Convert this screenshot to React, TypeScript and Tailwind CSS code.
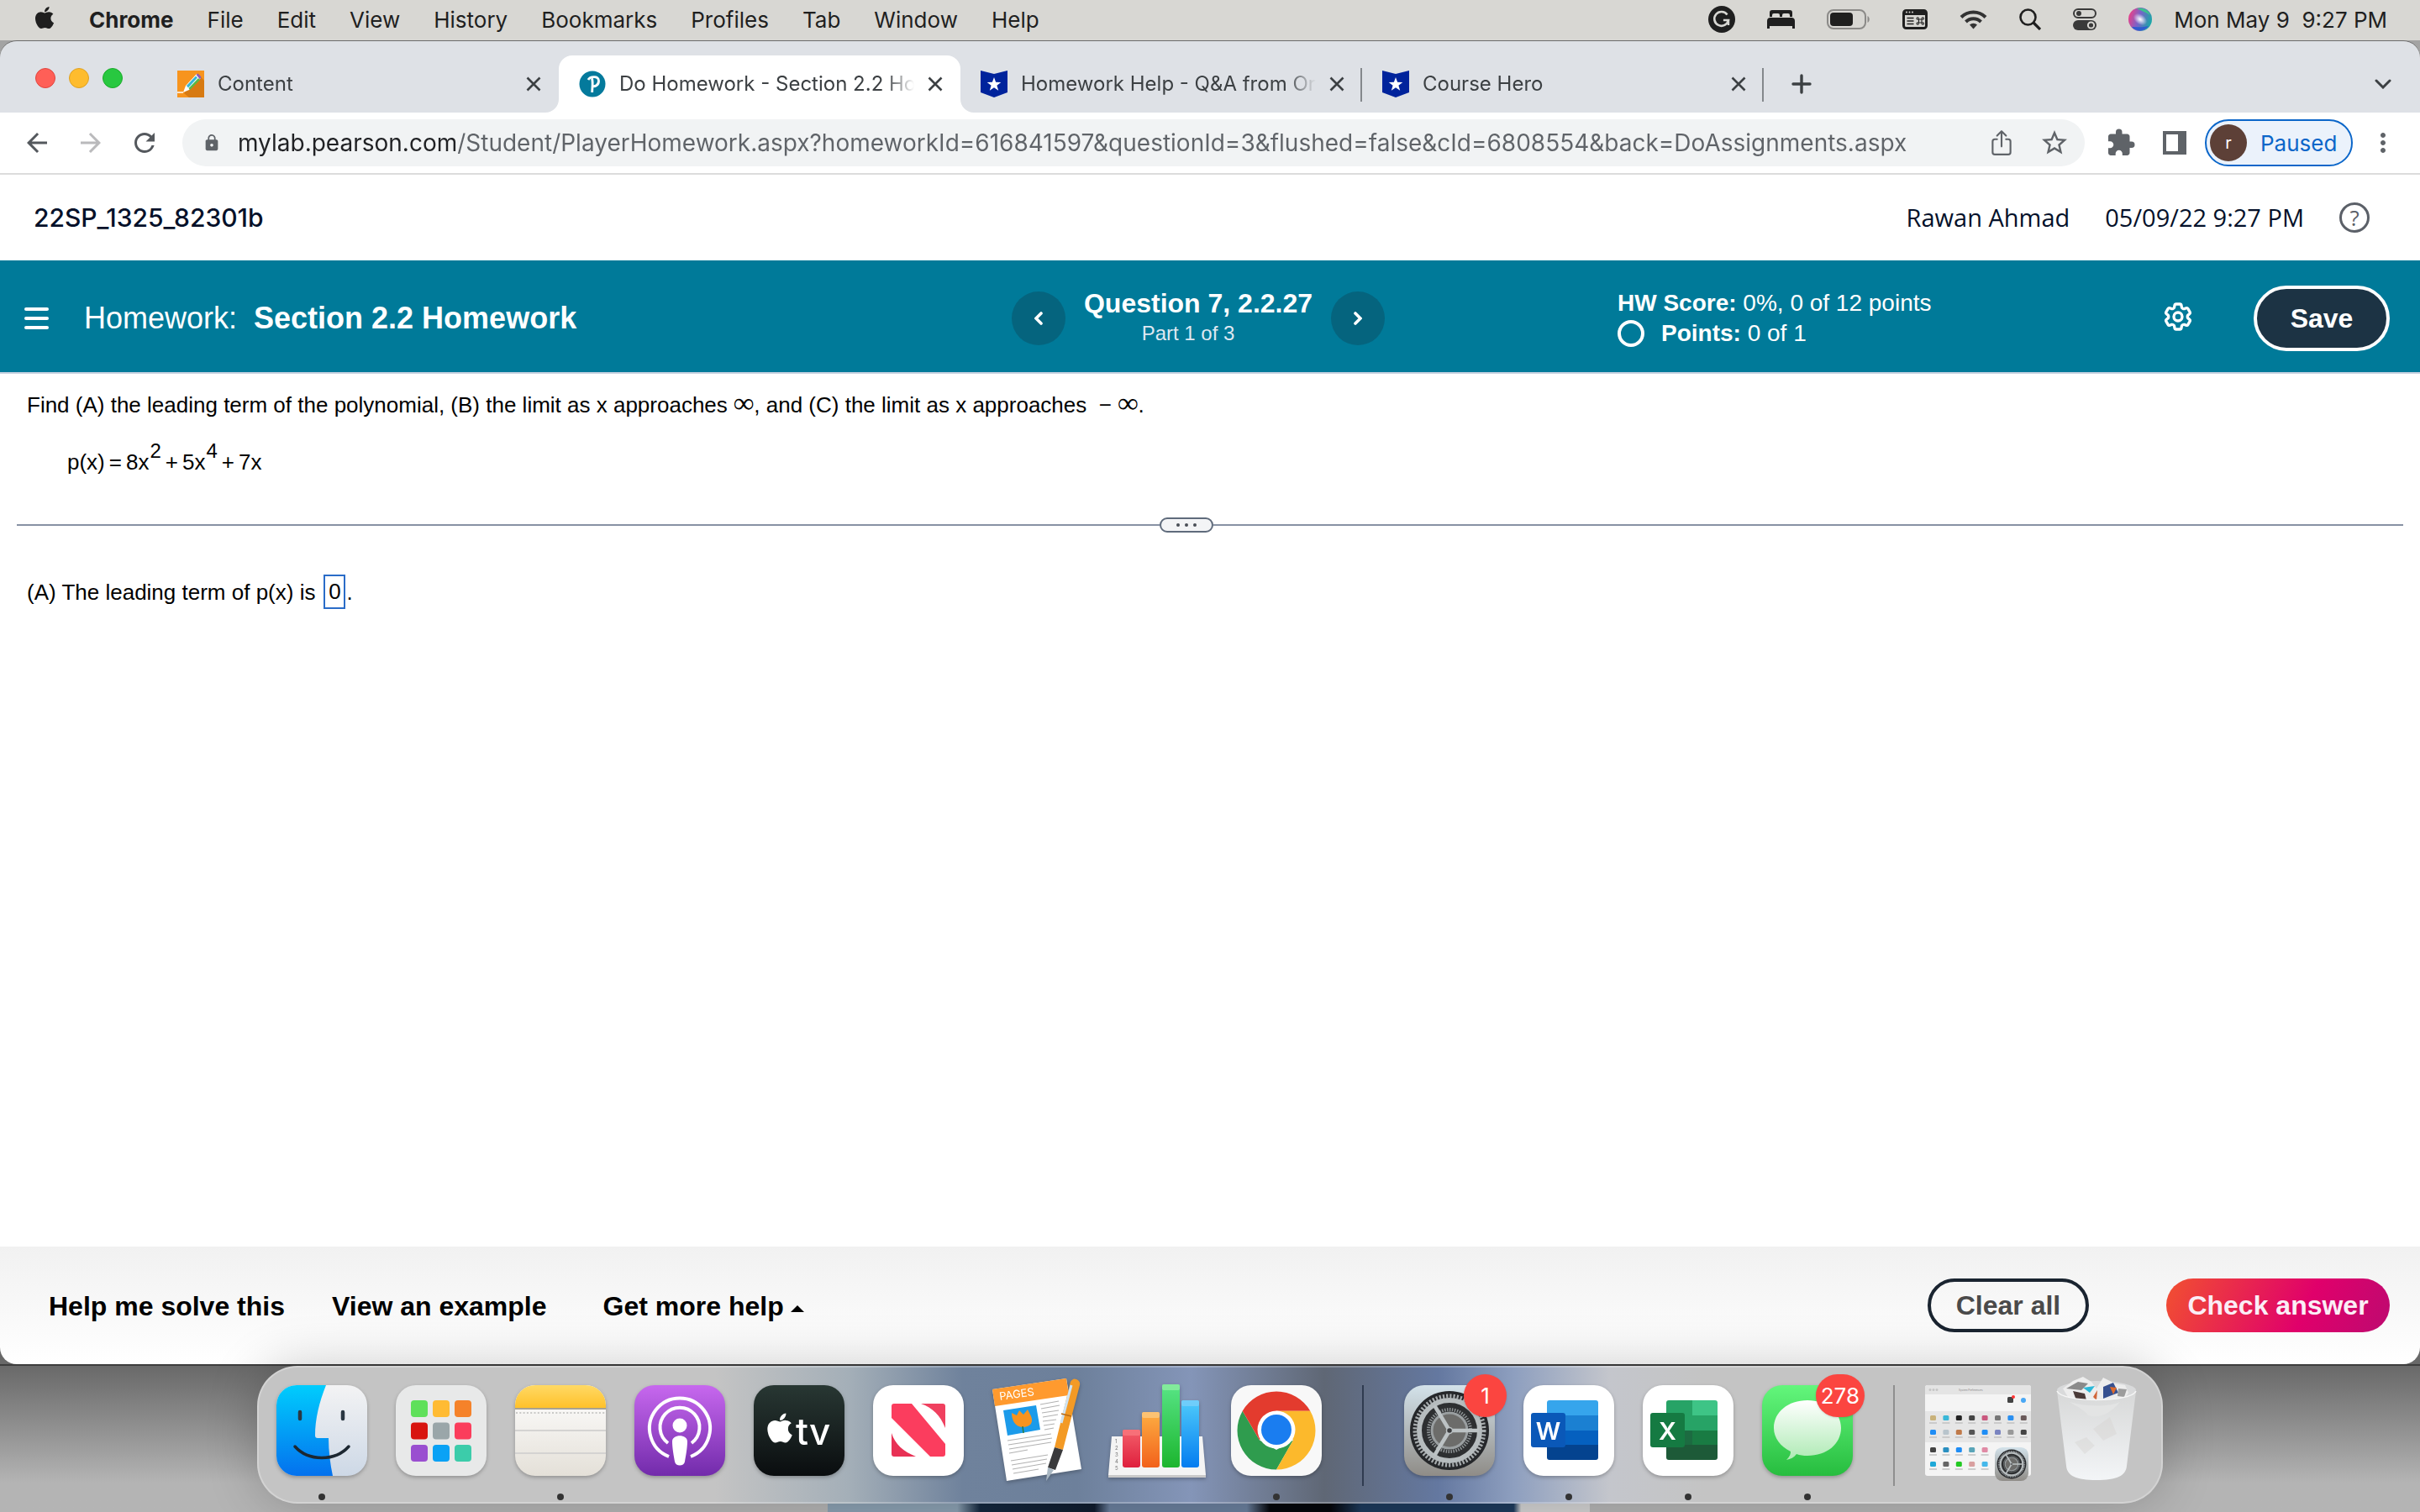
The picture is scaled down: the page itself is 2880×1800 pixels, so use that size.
import type { ReactNode } from "react";
import { FaApple } from "react-icons/fa";
import { HiOutlineCog6Tooth } from "react-icons/hi2";
import { IoShareOutline } from "react-icons/io5";
import {
  MdArrowBack,
  MdArrowForward,
  MdExtension,
  MdLock,
  MdMoreVert,
  MdRefresh,
  MdStarBorder,
} from "react-icons/md";

const MENUS = ["File", "Edit", "View", "History", "Bookmarks", "Profiles", "Tab", "Window", "Help"];

const URL_TEXT =
  "mylab.pearson.com/Student/PlayerHomework.aspx?homeworkId=616841597&questionId=3&flushed=false&cId=6808554&back=DoAssignments.aspx";

/* ---------- menu bar ---------- */

function StatusIcons() {
  return (
    <div className="flex items-center gap-[38px] text-[#1f1f1f]">
      <svg className="size-8" viewBox="0 0 32 32">
        <circle cx="16" cy="16" r="16" fill="currentColor" />
        <path d="M22.5 10.5a8.4 8.4 0 1 0 1.4 6.5h-6" fill="none" stroke="#d8d7d3" strokeWidth="2.6" />
        <path d="M24 16v7" stroke="#d8d7d3" strokeWidth="2.4" />
      </svg>
      <svg className="h-6 w-[33px]" viewBox="0 0 33 24" fill="currentColor">
        <path d="M3 9V4a3 3 0 0 1 3-3h21a3 3 0 0 1 3 3v5h-3V7a2 2 0 0 0-2-2h-5a2 2 0 0 0-2 2v2h-3V7a2 2 0 0 0-2-2H8a2 2 0 0 0-2 2v2z" />
        <path d="M0 14a4 4 0 0 1 4-4h25a4 4 0 0 1 4 4v9h-3v-3H3v3H0z" />
      </svg>
      <svg className="h-6 w-[52px]" viewBox="0 0 52 24">
        <rect x="1" y="1" width="45" height="22" rx="7" fill="none" stroke="#8b8a88" strokeWidth="2" />
        <rect x="4" y="4" width="27" height="16" rx="4" fill="currentColor" />
        <path d="M48.500 8c3 1.500 3 6.500 0 8z" fill="#8b8a88" />
      </svg>
      <svg className="h-6 w-[30px]" viewBox="0 0 30 24">
        <rect x="1.500" y="1.500" width="27" height="21" rx="3" fill="none" stroke="currentColor" strokeWidth="3" />
        <path d="M1 2h28v5H1z" fill="currentColor" />
        <circle cx="5" cy="3.500" r="1" fill="#d8d7d3" />
        <circle cx="8.500" cy="3.500" r="1" fill="#d8d7d3" />
        <circle cx="12" cy="3.500" r="1" fill="#d8d7d3" />
        <path d="M5.500 10.500h8M5.500 14h8M5.500 17.500h8" stroke="currentColor" strokeWidth="1.600" />
        <g fill="none" stroke="currentColor" strokeWidth="1.100">
          <path d="M19.500 12v4M23 12v4M19.500 12h3.500M19.500 16h3.500" />
          <circle cx="18.200" cy="11" r="1.200" />
          <circle cx="24.300" cy="11" r="1.200" />
          <circle cx="18.200" cy="17" r="1.200" />
          <circle cx="24.300" cy="17" r="1.200" />
        </g>
      </svg>
      <svg className="h-6 w-[33px]" viewBox="0 0 33 24" fill="none" stroke="#333" strokeWidth="4">
        <path d="M2 9.500a20.500 20.500 0 0 1 29 0" />
        <path d="M7.500 15a12.700 12.700 0 0 1 18 0" />
        <path d="M16.500 23.500l-4.500-5a6.500 6.500 0 0 1 9 0z" fill="#333" stroke="none" />
      </svg>
      <svg className="size-[26px]" viewBox="0 0 26 26" fill="none" stroke="currentColor" strokeWidth="2.600">
        <circle cx="10.500" cy="10.500" r="9" />
        <path d="M17 17l8 8" strokeWidth="3.200" />
      </svg>
      <svg className="h-[26px] w-7" viewBox="0 0 28 26">
        <rect x="1" y="1" width="26" height="10" rx="5" fill="none" stroke="#3a3a3a" strokeWidth="2" />
        <circle cx="7" cy="6" r="3" fill="#3a3a3a" />
        <rect y="14" width="28" height="12" rx="6" fill="#3a3a3a" />
        <circle cx="21.500" cy="20" r="3.600" fill="#3a3a3a" stroke="#d8d7d3" strokeWidth="2" />
      </svg>
      <svg className="size-7" viewBox="0 0 28 28">
        <defs>
          <linearGradient id="siri" x1="0" y1="0.300" x2="1" y2="0.600">
            <stop offset="0" stopColor="#ee3f86" />
            <stop offset="0.450" stopColor="#7a62c8" />
            <stop offset="1" stopColor="#16aaa6" />
          </linearGradient>
          <radialGradient id="siriGlow">
            <stop offset="0" stopColor="#fff" />
            <stop offset="0.300" stopColor="#fff" stopOpacity="0.700" />
            <stop offset="1" stopColor="#fff" stopOpacity="0" />
          </radialGradient>
        </defs>
        <circle cx="14" cy="14" r="14" fill="url(#siri)" />
        <path d="M4 23c5 6 15 6 20-1-8 2-13 1-20 1z" fill="#2f5bd0" />
        <path d="M10 1c7-2 14 2 16 8-6-4-11-5-16-8z" fill="#3cc08e" />
        <ellipse cx="14" cy="14" rx="9" ry="6" fill="url(#siriGlow)" transform="rotate(35 14 14)" />
      </svg>
    </div>
  );
}

function MenuBar() {
  return (
    <header className="flex h-12 items-center justify-between bg-[#d8d7d3] pr-[39px] pb-0.5 pl-[38px] text-[26px] text-[#1f1f1f]">
      <nav className="flex items-center gap-10" aria-label="Menu bar">
        <button type="button" aria-label="Apple">
          <FaApple className="mb-1 size-[30px]" />
        </button>
        <button type="button" className="-ml-0.5 font-bold">Chrome</button>
        {MENUS.map((m) => (
          <button type="button" key={m}>{m}</button>
        ))}
      </nav>
      <div className="flex items-center gap-[26px]">
        <StatusIcons />
        <span className="whitespace-pre">Mon May 9  9:27 PM</span>
      </div>
    </header>
  );
}

/* ---------- browser chrome ---------- */

function CloseIcon() {
  return (
    <svg className="size-[18px]" viewBox="0 0 18 18" stroke="#3c4043" strokeWidth="2.600">
      <path d="M1.500 1.500l15 15M16.500 1.500l-15 15" />
    </svg>
  );
}

function ContentFavicon() {
  return (
    <svg className="size-8 shrink-0" viewBox="0 0 32 32">
      <path d="M0 0h32v32H0z" fill="#f7941e" />
      <path d="M32 12v20H14l-6-5L25 4z" fill="#d77a12" />
      <path d="M7 26l3-8L23 4l5 5-14 14z" fill="#fff" />
      <path d="M11 18L22 6.500l2 2L13 20.500z" fill="#35b6d6" />
      <path d="M13.500 21L25 9l2 2-12 12z" fill="#59b947" />
      <path d="M22.500 5l2-1.500 4 4-1.500 3z" fill="#8e5bb5" />
      <path d="M0 26h7" stroke="#fff" strokeWidth="1.500" />
    </svg>
  );
}

function PearsonFavicon() {
  return (
    <svg className="size-8 shrink-0" viewBox="0 0 32 32">
      <circle cx="16" cy="16" r="15.500" fill="#047a9c" />
      <path
        d="M11 11c2-4 12-5.500 12.500 1 .3 5-4 7.500-8 6.500M15.500 9.500c1.500 5 .2 10 .2 16.500"
        fill="none"
        stroke="#fff"
        strokeWidth="2.800"
      />
    </svg>
  );
}

function HeroFavicon() {
  return (
    <svg className="size-8 shrink-0" viewBox="0 0 32 32">
      <path d="M0 0l16 4 16-4v26l-16 6-16-6z" fill="#00239c" />
      <path d="M16 8l2.100 5.800 6.200.2-4.900 3.800 1.800 6-5.200-3.500-5.200 3.500 1.800-6L7.700 14l6.200-.2z" fill="#fff" />
    </svg>
  );
}

type TabProps = { icon: ReactNode; title: string; active?: boolean; divider?: boolean };

function BrowserTab({ icon, title, active, divider }: TabProps) {
  return (
    <div
      className={`relative flex h-[68px] w-[478px] items-center gap-4 rounded-t-2xl pr-[21px] pl-6 ${
        active ? "bg-white" : ""
      }`}
    >
      {icon}
      <a
        href="#tab"
        className="min-w-0 flex-1 overflow-hidden mask-r-from-90% text-[24px] whitespace-nowrap text-[#3c4043]"
      >
        {title}
      </a>
      <button type="button" aria-label={`Close ${title}`}>
        <CloseIcon />
      </button>
      {divider && <span className="absolute top-[15px] right-0 h-10 w-0.5 bg-[#84888c]" />}
      {active && (
        <>
          <svg className="absolute bottom-0 -left-4 size-4" viewBox="0 0 16 16">
            <path d="M16 0v16H0A16 16 0 0 0 16 0z" fill="#fff" />
          </svg>
          <svg className="absolute -right-4 bottom-0 size-4" viewBox="0 0 16 16">
            <path d="M0 0v16h16A16 16 0 0 1 0 0z" fill="#fff" />
          </svg>
        </>
      )}
    </div>
  );
}

function TabStrip() {
  return (
    <div className="flex h-[85px] items-end rounded-t-[20px] bg-[#dee1e6]">
      <div className="flex h-full w-[187px] items-start gap-4 pt-8 pl-[42px]">
        <button type="button" aria-label="Close window" className="size-6 rounded-full border border-[#e0443e] bg-[#ff5f57]" />
        <button type="button" aria-label="Minimize window" className="size-6 rounded-full border border-[#dea123] bg-[#febc2e]" />
        <button type="button" aria-label="Zoom window" className="size-6 rounded-full border border-[#1aab29] bg-[#28c840]" />
      </div>
      <BrowserTab icon={<ContentFavicon />} title="Content" />
      <BrowserTab icon={<PearsonFavicon />} title="Do Homework - Section 2.2 Ho" active />
      <BrowserTab icon={<HeroFavicon />} title="Homework Help - Q&A from Or" divider />
      <BrowserTab icon={<HeroFavicon />} title="Course Hero" divider />
      <button type="button" aria-label="New tab" className="flex h-[68px] w-[90px] items-center justify-center">
        <svg className="size-6" viewBox="0 0 24 24" stroke="#3c4043" strokeWidth="3.400" strokeLinecap="round">
          <path d="M12 2v20M2 12h20" />
        </svg>
      </button>
      <button type="button" aria-label="Search tabs" className="mr-[34px] ml-auto flex h-[68px] items-center">
        <svg className="h-3 w-5" viewBox="0 0 20 12" fill="none" stroke="#3c4043" strokeWidth="3" strokeLinecap="round">
          <path d="M2 2l8 8 8-8" />
        </svg>
      </button>
    </div>
  );
}

function Toolbar() {
  return (
    <div className="flex h-[74px] items-center border-b-2 border-[#dcdcdc] bg-white px-[26px] text-[#5f6368]">
      <div className="flex gap-7">
        <button type="button" aria-label="Back"><MdArrowBack className="size-9 text-[#54585d]" /></button>
        <button type="button" aria-label="Forward"><MdArrowForward className="size-9 text-[#bababc]" /></button>
        <button type="button" aria-label="Reload"><MdRefresh className="size-9 text-[#54585d]" /></button>
      </div>
      <div className="ml-[27px] flex h-14 flex-1 items-center rounded-full bg-[#f1f3f4] pr-[18px] pl-6">
        <MdLock className="size-[22px]" />
        <input
          aria-label="Address and search bar"
          defaultValue={URL_TEXT}
          className="ml-5 h-14 flex-1 bg-[linear-gradient(90deg,#202124_259px,#5f6368_259px)] bg-clip-text text-[28px] text-transparent outline-none"
        />
        <div className="flex gap-7">
          <button type="button" aria-label="Share"><IoShareOutline className="size-[34px]" /></button>
          <button type="button" aria-label="Bookmark"><MdStarBorder className="size-9" /></button>
        </div>
      </div>
      <button type="button" aria-label="Extensions" className="ml-[25px]"><MdExtension className="size-9" /></button>
      <button type="button" aria-label="Side panel" className="ml-7 flex size-9 items-center justify-center">
        <span className="h-7 w-7 border-4 border-r-[10px] border-[#5f6368]" />
      </button>
      <button
        type="button"
        className="ml-[18px] flex h-14 w-44 items-center gap-4 rounded-full border-2 border-[#0b66c9] bg-[#ebf2fb] pl-1 text-[26px] text-[#0b66c9]"
      >
        <span className="flex size-11 items-center justify-center rounded-full bg-[#5d4037] text-[20px] text-white">r</span>
        Paused
      </button>
      <button type="button" aria-label="More" className="ml-[18px]"><MdMoreVert className="size-9" /></button>
    </div>
  );
}

/* ---------- homework page ---------- */

function CourseHeader() {
  return (
    <div className="flex h-[102px] items-center justify-between bg-white pr-[60px] pl-10 text-[#05112a]">
      <h1 className="text-[30px] font-medium">22SP_1325_82301b</h1>
      <div className="flex items-center gap-[42px] font-['Open_Sans',sans-serif] text-[29px]">
        <span>Rawan Ahmad</span>
        <span>05/09/22 9:27 PM</span>
        <button
          type="button"
          aria-label="Help"
          className="flex size-9 items-center justify-center rounded-full border-[3px] border-[#5b6068] text-[26px] text-[#5b6068]"
        >
          ?
        </button>
      </div>
    </div>
  );
}

function NavCircle({ label, d }: { label: string; d: string }) {
  return (
    <button type="button" aria-label={label} className="flex size-16 items-center justify-center rounded-full bg-[#05647e]">
      <svg className="h-4 w-2.5" viewBox="0 0 10 16" fill="none" stroke="#fff" strokeWidth="3.600" strokeLinecap="round">
        <path d={d} />
      </svg>
    </button>
  );
}

function QuestionBar() {
  return (
    <div className="grid h-[135px] grid-cols-[1204px_721px_1fr] items-center border-b-2 border-[#c7d2e0] bg-[#007a99] pt-1 text-white">
      <div className="flex items-center pl-[29px]">
        <button type="button" aria-label="Open menu" className="flex flex-col gap-[7px]">
          <span className="h-1 w-[29px] rounded-full bg-white" />
          <span className="h-1 w-[29px] rounded-full bg-white" />
          <span className="h-1 w-[29px] rounded-full bg-white" />
        </button>
        <h2 className="ml-[42px] flex gap-5 text-[36px]">
          <span>Homework:</span>
          <strong>Section 2.2 Homework</strong>
        </h2>
      </div>
      <div className="flex items-center">
        <NavCircle label="Previous question" d="M8 2L2 8l6 6" />
        <div className="w-[316px] text-center">
          <p className="text-[32px] leading-9 font-bold">Question 7, 2.2.27</p>
          <p className="pr-6 text-[24px] leading-9 text-[#dfe8f2]">Part 1 of 3</p>
        </div>
        <NavCircle label="Next question" d="M2 2l6 6-6 6" />
      </div>
      <div className="flex items-center justify-between pr-9">
        <div className="text-[28px] leading-9">
          <p><b>HW Score:</b> 0%, 0 of 12 points</p>
          <p className="flex items-center gap-5">
            <span className="size-8 rounded-full border-4 border-white" />
            <span><b>Points:</b> 0 of 1</span>
          </p>
        </div>
        <div className="flex items-center gap-[70px]">
          <button type="button" aria-label="Settings"><HiOutlineCog6Tooth className="mb-1 size-10 stroke-2" /></button>
          <button type="button" className="h-[78px] w-[162px] rounded-full border-4 border-white bg-[#1c3344] text-[32px] font-bold">
            Save
          </button>
        </div>
      </div>
    </div>
  );
}

function Infinity() {
  return <span className="font-['Liberation_Serif',serif] text-[34px] leading-none font-bold">∞</span>;
}

function Power({ children }: { children: string }) {
  return <sup className="-top-[0.6em] ml-px text-[24px] leading-none">{children}</sup>;
}

function Exercise() {
  return (
    <main className="flex-1 bg-white text-[26px] leading-10 text-black">
      <div className="px-8 pt-[17px]">
        <p>
          Find (A) the leading term of the polynomial, (B) the limit as x approaches <Infinity />, and (C) the limit as x
          approaches&nbsp; − <Infinity />.
        </p>
        <p className="mt-7 ml-12 flex gap-[5px]">
          <span>p(x)</span>
          <span>=</span>
          <span>8x<Power>2</Power></span>
          <span>+</span>
          <span>5x<Power>4</Power></span>
          <span>+</span>
          <span>7x</span>
        </p>
      </div>
      <div className="mx-5 mt-[46px] flex items-center">
        <span className="h-0.5 grow basis-0 bg-[#8792a4]" />
        <button
          type="button"
          aria-label="Resize panes"
          className="flex h-[18px] w-16 items-center justify-center gap-1.5 rounded-full border-2 border-[#5f6b7c] bg-[#f3f4f6]"
        >
          <span className="size-1 rounded-full bg-[#4a4f57]" />
          <span className="size-1 rounded-full bg-[#4a4f57]" />
          <span className="size-1 rounded-full bg-[#4a4f57]" />
        </button>
        <span className="h-0.5 grow basis-14 bg-[#8792a4]" />
      </div>
      <p className="mt-[50px] flex items-center px-8">
        <label htmlFor="term">(A) The leading term of p(x) is</label>
        <input
          id="term"
          defaultValue="0"
          className="mr-px ml-2.5 h-[41px] w-[26px] border-2 border-[#2a6cc8] text-center outline-none"
        />
        .
      </p>
    </main>
  );
}

function ActionBar() {
  return (
    <footer className="flex h-[140px] items-center justify-between rounded-b-[20px] bg-linear-to-b from-[#f1f1f1] to-white pr-9 pl-[58px] text-[32px] font-bold text-black">
      <div className="flex pt-0.5">
        <button type="button">Help me solve this</button>
        <button type="button" className="ml-14">View an example</button>
        <button type="button" className="ml-[67px] flex items-center gap-2">
          Get more help
          <svg className="mt-1.5 h-2 w-4" viewBox="0 0 16 8"><path d="M8 0l8 8H0z" /></svg>
        </button>
      </div>
      <div className="flex gap-[92px]">
        <button type="button" className="h-16 w-48 rounded-full border-4 border-[#1a2430] text-[#4a4a4a]">Clear all</button>
        <button
          type="button"
          className="h-16 w-[266px] rounded-full bg-[linear-gradient(115deg,#f04a35_5%,#e0006b_62%,#bd0a70)] text-[#fbeef6]"
        >
          Check answer
        </button>
      </div>
    </footer>
  );
}

/* ---------- dock ---------- */

function Finder() {
  return (
    <>
      <path d="M24 0h60a24 24 0 0 1 24 24v60a24 24 0 0 1-24 24H24A24 24 0 0 1 0 84V24A24 24 0 0 1 24 0z" fill="url(#finderR)" />
      <path d="M24 0h35C51 20 46 40 46 60q0 3 3 3h13c0 15 2 31 5 45H24A24 24 0 0 1 0 84V24A24 24 0 0 1 24 0z" fill="url(#finderL)" />
      <path d="M28 32v8M79 32v8" stroke="#2a3742" strokeWidth="4.500" strokeLinecap="round" />
      <path d="M22 73c16 18 48 18 64 0" fill="none" stroke="#1c2731" strokeWidth="3.500" strokeLinecap="round" />
    </>
  );
}

const PAD = [
  ["#5fe05a", "#ffbb33", "#f5822a"],
  ["#d8140f", "#9aa6a9", "#fb3d5c"],
  ["#9a4fd0", "#0aa2f5", "#3cccaa"],
];

function Launchpad() {
  return (
    <>
      <rect width="108" height="108" rx="24" fill="#e8e9e9" />
      {PAD.map((row, r) =>
        row.map((c, i) => <rect key={c} x={18 + i * 26} y={18 + r * 26.500} width="20" height="20" rx="4" fill={c} />)
      )}
    </>
  );
}

function Notes() {
  return (
    <>
      <rect width="108" height="108" rx="24" fill="url(#notesP)" />
      <path d="M0 27v-3A24 24 0 0 1 24 0h60a24 24 0 0 1 24 24v3z" fill="url(#notesY)" />
      <path d="M0 28h108" stroke="#a9a28f" strokeWidth="2" />
      <path d="M1 33h107" stroke="#c9c9c7" strokeWidth="2" strokeDasharray="2 2.300" />
      <path d="M0 54h108M0 81h108" stroke="#d4d3d2" strokeWidth="2" />
    </>
  );
}

function Podcasts() {
  return (
    <>
      <rect width="108" height="108" rx="24" fill="url(#pod)" />
      <g fill="none" stroke="#fff" strokeWidth="4">
        <path d="M41 85a36 36 0 1 1 26 0" />
        <path d="M40 69a23.500 23.500 0 1 1 28 0" />
      </g>
      <circle cx="54" cy="48" r="8.500" fill="#fff" />
      <path d="M45 67c0-9 18-9 18 0 0 8-2 18-3 24-1 6-11 6-12 0-1-6-3-16-3-24z" fill="#fff" />
    </>
  );
}

function AppleTv() {
  return (
    <>
      <rect width="108" height="108" rx="24" fill="url(#tv)" />
      <FaApple x="11" y="31" size={40} color="#fff" />
      <text x="50" y="71" fontSize="44" fontWeight="500" fill="#fff">tv</text>
    </>
  );
}

function News() {
  return (
    <>
      <rect width="108" height="108" rx="24" fill="#fff" />
      <path d="M25 22h21l40 48v12q0 3-3 3H68L22 39V25q0-3 3-3z" fill="#fb3d5e" />
      <path d="M57 22h26q3 0 3 3v26C80 36 71 27 57 22z" fill="#f0405f" />
      <path d="M22 57c4 13 14 22 29 28H25q-3 0-3-3z" fill="#e83155" />
    </>
  );
}

function Pages() {
  return (
    <>
      <path d="M0 5L88-8l18 108-89 14z" fill="#fff" />
      <path d="M0 5L88-8l3 20L3 25z" fill="#ff9a2e" />
      <text x="9" y="18" fontSize="13" fill="#fff" transform="rotate(-8 9 18)">PAGES</text>
      <path d="M13 30l39-6 5 29-39 7z" fill="#1c9bea" />
      <path d="M35 50c-8-1-12-8-12-17l6 3 3-6 5 5 5-6 4 8c3 7 0 13-11 13z" fill="#f7931e" />
      <path d="M36 49l1 8" stroke="#2f7a38" strokeWidth="1.500" />
      <g stroke="#b2b2b2" strokeWidth="1.200">
        <path d="M57 23l22-4M58 28l22-4M59 33l20-3M60 38l18-3M60 43l16-2M61 48l13-2M62 53l11-2" />
        <path d="M18 66l52-8M19 71l52-8M20 76l50-8M20 81l22-4M22 90l44-7M23 95l42-7M24 100l40-7M25 105l30-5" />
      </g>
      <path d="M93-4q3-5 7-3 5 2 4 7L84 77l-10-3z" fill="#f39a25" />
      <path d="M94 0l-12 45" stroke="#cfe3f2" strokeWidth="3" />
      <path d="M82 34l12 3" stroke="#b96a12" strokeWidth="1.500" />
      <path d="M74 74l10 3-9 24-9-3z" fill="#3a3a3c" />
      <path d="M66 98l7 3-9 13z" fill="#a9b7c2" />
    </>
  );
}

const BARS = [
  { x: 13, y: 53, fill: "url(#barR)", cap: "#f77078" },
  { x: 36, y: 32, fill: "url(#barO)", cap: "#fcc272" },
  { x: 60, y: -1, fill: "url(#barG)", cap: "#82eb9b" },
  { x: 83, y: 18, fill: "url(#barB)", cap: "#6fcdfa" },
];

function Numbers() {
  return (
    <>
      <path d="M0 61h108l4 46H-4z" fill="#f4f4f4" />
      <path d="M-4 107h116v3H-4z" fill="#c9c9c9" />
      {["1", "2", "3", "4", "5"].map((n, i) => (
        <text key={n} x="4" y={69 + i * 8} fontSize="6" fill="#777">{n}</text>
      ))}
      {BARS.map((b) => (
        <g key={b.x}>
          <rect x={b.x} y={b.y} width="21" height={98 - b.y} rx="3" fill={b.fill} />
          <rect x={b.x} y={b.y} width="21" height="7" rx="2" fill={b.cap} />
        </g>
      ))}
    </>
  );
}

function Chrome() {
  return (
    <>
      <rect width="108" height="108" rx="24" fill="#f8f8f8" />
      <path d="M54 100.500A46.500 46.500 0 0 1 13.700 30.800L34 65.500 54 77l20-11.500z" fill="#2f9c4e" />
      <path d="M13.700 30.800A46.500 46.500 0 0 1 94.300 30.800H54L34 65.500z" fill="#e33b2e" />
      <path d="M54 30.800h40.300A46.500 46.500 0 0 1 54 100.500L74 65.500z" fill="#fcb92c" />
      <circle cx="54" cy="53" r="22.500" fill="#fff" />
      <circle cx="54" cy="53" r="18" fill="#1a7df0" />
    </>
  );
}

function Gear() {
  return (
    <>
      <rect width="108" height="108" rx="24" fill="url(#gearBg)" />
      <circle cx="54" cy="54" r="47" fill="#25272a" />
      <circle cx="54" cy="54" r="41" fill="none" stroke="#a6abad" strokeWidth="5" strokeDasharray="2.200 2" />
      <circle cx="54" cy="54" r="36" fill="#2d2f31" stroke="#b6bcbe" strokeWidth="6" />
      <circle cx="54" cy="54" r="25" fill="none" stroke="#8d9294" strokeWidth="4" strokeDasharray="1.500 1.500" />
      <circle cx="54" cy="54" r="21" fill="#6c6c6a" stroke="#9a9fa1" strokeWidth="3" />
      <path d="M54 54h35M54 54L36 24M54 54L36 84" stroke="#bcc2c4" strokeWidth="4.500" />
      <circle cx="54" cy="54" r="3.500" fill="#3a3c3e" stroke="#bcc2c4" strokeWidth="1.500" />
    </>
  );
}

function Word() {
  return (
    <>
      <rect width="108" height="108" rx="24" fill="#fff" />
      <path d="M28 36V21q0-3 3-3h55q3 0 3 3v15z" fill="#36a5ec" />
      <path d="M28 36h61v18H28z" fill="#1b80d2" />
      <path d="M28 54h61v18H28z" fill="#0560bf" />
      <path d="M28 71h61v15q0 3-3 3H31q-3 0-3-3z" fill="#04438f" />
      <rect x="9" y="33" width="41" height="41" rx="3" fill="#0a58b8" />
      <text x="29.500" y="65" fontSize="29" fontWeight="600" fill="#fff" textAnchor="middle">W</text>
    </>
  );
}

function Excel() {
  return (
    <>
      <rect width="108" height="108" rx="24" fill="#fff" />
      <path d="M28 71V21q0-3 3-3h28v53z" fill="#27a366" />
      <path d="M59 18h27q3 0 3 3v15H59z" fill="#3ec486" />
      <path d="M59 36h30v18H59z" fill="#27a366" />
      <path d="M28 54h31v18H28z" fill="#1c6b41" />
      <path d="M59 54h30v18H59z" fill="#197b43" />
      <path d="M28 71h61v15q0 3-3 3H31q-3 0-3-3z" fill="#1d5a38" />
      <rect x="9" y="33" width="41" height="41" rx="3" fill="#157a42" />
      <text x="29.500" y="65" fontSize="29" fontWeight="600" fill="#fff" textAnchor="middle">X</text>
    </>
  );
}

function Messages() {
  return (
    <>
      <rect width="108" height="108" rx="24" fill="url(#msg)" />
      <path d="M54 18c23 0 40 14 40 33S77 84 54 84c-5 0-9-.5-13-2-3 4-7 6-12 7 4-4 5-7 5-10C22 73 14 63 14 51c0-19 17-33 40-33z" fill="url(#bubble)" />
    </>
  );
}

const PREF_ROWS = [
  { y: 36, colors: ["#c9b27a", "#3ab8d8", "#222", "#444", "#c9587e", "#777", "#2a8ff0", "#6a5a5a"] },
  { y: 53, colors: ["#1f8df5", "#b8c4cc", "#c07a4a", "#555", "#1f8df5", "#7a84c0", "#999", "#444"] },
  { y: 74, colors: ["#444", "#2a8fc0", "#1f8df5", "#5aa5b8", "#e08aa5"] },
  { y: 91, colors: ["#1fa9d8", "#666", "#22c922", "#d9a0a0", "#46b8ea"] },
];

function PrefsWindow() {
  return (
    <svg className="h-[108px] w-[126px] overflow-visible" viewBox="0 0 126 108">
      <rect width="126" height="108" rx="3" fill="#f4f4f4" />
      <path d="M0 11h126V3q0-3-3-3H3Q0 0 0 3z" fill="#e4e4e4" />
      <path d="M0 31h126v37H0z" fill="#e6e6e6" />
      <circle cx="6" cy="5.500" r="1.500" fill="#c6c6c6" />
      <circle cx="10" cy="5.500" r="1.500" fill="#c6c6c6" />
      <circle cx="14" cy="5.500" r="1.500" fill="#c6c6c6" />
      <text x="40" y="7" fontSize="3" fill="#8a8a8a">System Preferences</text>
      <rect x="98" y="14" width="7" height="7" rx="1.500" fill="#444" />
      <circle cx="105" cy="14" r="2" fill="#f33" />
      <circle cx="117" cy="18" r="3" fill="#4aa8f5" />
      {PREF_ROWS.map((row) =>
        row.colors.map((c, i) => (
          <g key={`${row.y}-${i}`}>
            <rect x={6 + i * 15.400} y={row.y} width="7" height="6" rx="1.500" fill={c} />
            <path d={`M${5 + i * 15.400} ${row.y + 9}h9`} stroke="#c2c2c2" strokeWidth="1.500" />
          </g>
        ))
      )}
      <svg x="83" y="74" width="40" height="40" viewBox="0 0 108 108">
        <Gear />
      </svg>
    </svg>
  );
}

function Trash() {
  return (
    <svg className="h-[108px] w-[96px] overflow-visible" viewBox="0 0 96 108">
      <ellipse cx="48" cy="6" rx="47" ry="11" fill="#d9dadb" />
      <path d="M8 4l12-9 12-5 10 6 6 8 8-13 14 7 12 2 4 9-8 12H18z" fill="#ededed" />
      <path d="M12 4l14-8 12 2-8 8z" fill="#8a8a8a" />
      <path d="M20 7l14 3 2 8H24z" fill="#4a3a38" />
      <path d="M32 3l14-2-6 8z" fill="#2cb8d8" />
      <path d="M56 2l12-5 6 12-18 7z" fill="#36508f" />
      <path d="M64 2l8 1-4 8z" fill="#dd6a2c" />
      <path d="M44 14l5-8-1 12z" fill="#d0663a" />
      <path d="M74 4l10 1-3 9-8-1z" fill="#9c9c9c" />
      <path d="M1 7c6 14 88 14 94 0L84 96c-1 12-12 17-36 17S13 108 12 96z" fill="url(#trash)" />
      <path d="M16 20c10 6 18 10 22 16 14 4 26-2 38-16-12 6-40 6-60 0z" fill="#e3e4e4" />
      <path d="M22 68l14-6 10 10-12 10zM44 52l20-14 8 20-16 8z" fill="#d5d3d0" opacity="0.400" />
      <path d="M1 7c6 14 88 14 94 0" fill="none" stroke="#f6f6f6" strokeWidth="1.500" />
    </svg>
  );
}

function DockDefs() {
  const stops: [string, string, string][] = [
    ["finderL", "#00cdfd", "#0471ee"],
    ["finderR", "#f3f3f4", "#cdd8e6"],
    ["notesY", "#ffd965", "#ffc12a"],
    ["notesP", "#ffffff", "#e4e0d8"],
    ["pod", "#c768ee", "#722bab"],
    ["tv", "#283733", "#0a0d0f"],
    ["barR", "#f35f6a", "#df1f3d"],
    ["barO", "#fdae42", "#f2611b"],
    ["barG", "#58e586", "#1cb52e"],
    ["barB", "#4fcbfb", "#047cf0"],
    ["gearBg", "#d3e2ea", "#8f8c87"],
    ["msg", "#63f67c", "#27bd3f"],
    ["bubble", "#ffffff", "#aeeab4"],
    ["trash", "#d7d8d8", "#f3f5f7"],
  ];
  return (
    <svg className="absolute size-0" aria-hidden="true">
      <defs>
        {stops.map(([id, a, b]) => (
          <linearGradient key={id} id={id} x1="0" y1="0" x2="0" y2="1">
            <stop offset="0" stopColor={a} />
            <stop offset="1" stopColor={b} />
          </linearGradient>
        ))}
      </defs>
    </svg>
  );
}

type DockItemProps = { label: string; running?: boolean; badge?: string; children: ReactNode };

function DockItem({ label, running, badge, children }: DockItemProps) {
  return (
    <button type="button" aria-label={label} className="relative size-[108px]">
      <svg className="size-[108px] overflow-visible drop-shadow-[0_2px_2px_rgba(0,0,0,0.25)]" viewBox="0 0 108 108">
        {children}
      </svg>
      {badge && (
        <span className="absolute -top-[13px] -right-3.5 flex h-[51px] min-w-[51px] items-center justify-center rounded-full bg-[#fb4540] px-1.5 text-[26px] text-white shadow">
          {badge}
        </span>
      )}
      {running && <span className="absolute top-[129px] left-[50px] size-2 rounded-full bg-[#333]" />}
    </button>
  );
}

function Dock() {
  return (
    <div className="relative flex h-44 justify-center bg-linear-to-b from-[#686868] to-[#b4b4b4] to-80%">
      <DockDefs />
      {/* slice of wallpaper that shows above and below the dock */}
      <div className="absolute inset-y-0 left-[34.2%] w-[31.5%] bg-[linear-gradient(90deg,#8ba0b2_0%,#8ba0b2_17%,#14283f_20%,#101c2e_35%,#6a7f9d_37%,#6a7f9d_55%,#05070c_58%,#05070c_66%,#1d3a5c_70%,#1d3a5c_90%,#d2d2d2_91%)]" />
      <div className="absolute inset-x-0 top-0 h-0.5 bg-[#3d3d3d]" />
      <div className="relative mt-0.5 flex h-[164px] rounded-[48px] border-2 border-white/25 bg-[linear-gradient(90deg,#c4c4c4_0%,#c4c4c4_24%,#a4afb8_31%,#6f829c_37%,#6d809b_43%,#8495b8_49%,#5f6775_56%,#6478a0_62%,#8e9fbf_66%,#c4c6cc_71%,#c4c4c4_76%)] px-[21px] pt-[21px] shadow-[0_0_60px_rgba(0,0,0,0.22)]">
        <div className="flex gap-[34px]">
          <DockItem label="Finder" running><Finder /></DockItem>
          <DockItem label="Launchpad"><Launchpad /></DockItem>
          <DockItem label="Notes" running><Notes /></DockItem>
          <DockItem label="Podcasts"><Podcasts /></DockItem>
          <DockItem label="TV"><AppleTv /></DockItem>
          <DockItem label="News"><News /></DockItem>
          <DockItem label="Pages"><Pages /></DockItem>
          <DockItem label="Numbers"><Numbers /></DockItem>
          <DockItem label="Google Chrome" running><Chrome /></DockItem>
        </div>
        <span className="mx-12 h-[120px] w-0.5 bg-[#2f3b50]" />
        <div className="flex gap-[34px]">
          <DockItem label="System Preferences" running badge="1"><Gear /></DockItem>
          <DockItem label="Microsoft Word" running><Word /></DockItem>
          <DockItem label="Microsoft Excel" running><Excel /></DockItem>
          <DockItem label="Messages" running badge="278"><Messages /></DockItem>
        </div>
        <span className="mr-9 ml-12 h-[120px] w-0.5 bg-[#8f8f8f]" />
        <div className="flex items-start gap-[30px] pr-2">
          <button type="button" aria-label="System Preferences window"><PrefsWindow /></button>
          <button type="button" aria-label="Trash"><Trash /></button>
        </div>
      </div>
    </div>
  );
}

export default function App() {
  return (
    <div className="flex min-h-screen flex-col bg-[#a3a3a3] font-[Inter,sans-serif]">
      <MenuBar />
      <div className="flex flex-1 flex-col rounded-t-[20px] border-t border-[#6b6b6b]">
        <TabStrip />
        <Toolbar />
        <CourseHeader />
        <div className="flex flex-1 flex-col font-['Liberation_Sans',Arial,sans-serif]">
          <QuestionBar />
          <Exercise />
          <div className="bg-[#686868]">
            <ActionBar />
          </div>
        </div>
      </div>
      <Dock />
    </div>
  );
}
